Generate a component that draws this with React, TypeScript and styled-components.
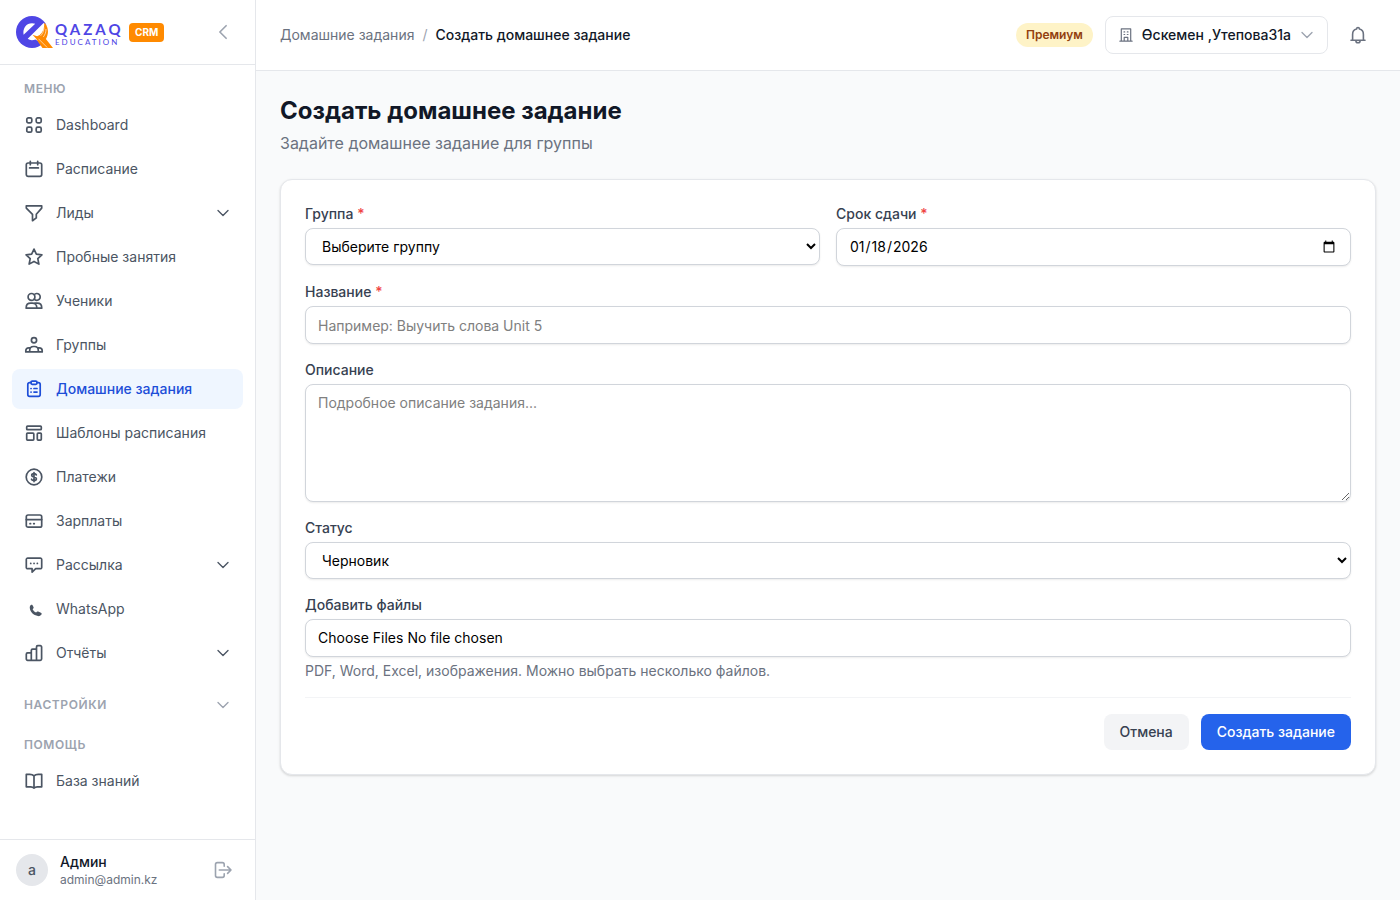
import React from "react";
import styled, { createGlobalStyle, css } from "styled-components";

const GlobalStyle = createGlobalStyle`
  *, *::before, *::after { box-sizing: border-box; }
  body {
    margin: 0;
    background: #f9fafb;
    color: #111827;
    font-family: Inter, "Liberation Sans", sans-serif;
    font-size: 14px;
    line-height: 20px;
  }
  a { color: inherit; text-decoration: none; }
  button { font: inherit; border: 0; background: none; padding: 0; color: inherit; cursor: pointer; }
  h1, h2, p, ul { margin: 0; padding: 0; }
  ul { list-style: none; }
  svg { display: block; flex-shrink: 0; }
`;

/* ---------- icons ---------- */

const Outline: React.FC<{ children: React.ReactNode; size?: number; stroke?: number; box?: number }> = ({
  children,
  size = 20,
  stroke = 1.7,
  box = 20,
}) => (
  <svg
    width={size}
    height={size}
    viewBox={`0 0 ${box} ${box}`}
    fill="none"
    stroke="currentColor"
    strokeWidth={stroke}
    strokeLinecap="round"
    strokeLinejoin="round"
    aria-hidden="true"
  >
    {children}
  </svg>
);

const icons = {
  grid: (
    <Outline>
      <rect x="2.8" y="2.8" width="5" height="5" rx="1.5" />
      <rect x="12.2" y="2.8" width="5" height="5" rx="1.5" />
      <rect x="2.8" y="12.2" width="5" height="5" rx="1.5" />
      <rect x="12.2" y="12.2" width="5" height="5" rx="1.5" />
    </Outline>
  ),
  calendar: (
    <Outline>
      <rect x="2.3" y="4" width="15.4" height="13.4" rx="1.8" />
      <path d="M6.3 2.3v3.4M13.7 2.3v3.4M5.6 8.9h8.8" />
    </Outline>
  ),
  funnel: (
    <Outline>
      <path d="M2.3 2.8h15.4v2.300l-5.400 6.200v3.600l-3.800 2.800v-6.400L2.300 5.100z" />
    </Outline>
  ),
  star: (
    <Outline>
      <path d="m10 2.100 2.350 5.050 5.550.680-4.100 3.800 1.080 5.500L10 14.400l-4.880 2.730 1.080-5.500-4.100-3.800 5.550-.680z" />
    </Outline>
  ),
  users: (
    <Outline>
      <circle cx="7.500" cy="5.900" r="3.400" />
      <path d="M10.200 3.700a3.400 3.400 0 1 1 0 4.400M2.200 17.200v-.7c0-2.600 1.900-4.300 4.500-4.300h1.600c2.600 0 4.500 1.700 4.500 4.300v.7zM11.200 12.200h2c2.600 0 4.500 1.700 4.500 4.300v.7h-4.900" />
    </Outline>
  ),
  group: (
    <Outline>
      <circle cx="10" cy="5.300" r="2.600" />
      <path d="M5.700 16.900v-1.600c0-2.200 1.600-3.800 3.800-3.800h1c2.200 0 3.800 1.600 3.800 3.800v1.600zM6.100 12.900H4.800c-1.900 0-3 1.200-3 2.900v1.100h3.900M13.900 12.900h1.300c1.900 0 3 1.200 3 2.900v1.100h-3.900" />
    </Outline>
  ),
  clipboard: (
    <Outline>
      <path d="M7 3.600H5.600A1.800 1.800 0 0 0 3.800 5.400v10.200a1.800 1.800 0 0 0 1.800 1.800h8.800a1.800 1.800 0 0 0 1.800-1.800V5.400a1.800 1.800 0 0 0-1.800-1.800H13" />
      <rect x="7" y="2.100" width="6" height="3.200" rx="1.200" />
      <path d="M7 9.500h.1M10 9.500h3M7 13.100h.1M10 13.100h3" />
    </Outline>
  ),
  template: (
    <Outline>
      <rect x="2.700" y="3.200" width="14.600" height="3.500" rx=".8" />
      <rect x="2.700" y="10.200" width="7.100" height="6.900" rx=".8" />
      <rect x="13.300" y="10.200" width="4" height="6.900" rx=".8" />
    </Outline>
  ),
  dollar: (
    <Outline>
      <circle cx="10" cy="10" r="7.800" />
      <path d="M12.300 7.900c-.3-.8-1.200-1.300-2.300-1.300-1.300 0-2.300.6-2.300 1.600 0 2.500 4.700 1.200 4.700 3.600 0 1.100-1.100 1.700-2.400 1.700-1.200 0-2.200-.5-2.500-1.300M10 5.500v9.100" />
    </Outline>
  ),
  card: (
    <Outline>
      <rect x="2.300" y="4" width="15.400" height="12.200" rx="1.800" />
      <path d="M2.300 8.600h15.400M6 12.700h.6M9.700 12.700h.6" />
    </Outline>
  ),
  message: (
    <Outline>
      <path d="M4.100 3.100h11.800a1.500 1.500 0 0 1 1.800 1.800v7a1.500 1.500 0 0 1-1.800 1.800h-4.200l-3.600 3.400v-3.400h-4a1.500 1.500 0 0 1-1.800-1.800v-7a1.500 1.500 0 0 1 1.800-1.800z" />
      <path d="M6.700 8.400h.1M10 8.400h.1M13.300 8.400h.1" />
    </Outline>
  ),
  phone: (
    <svg width="20" height="20" viewBox="0 0 20 20" fill="currentColor" aria-hidden="true">
      <path d="M6.900 5.900c.5-.4 1.200-.3 1.500.2l1.100 2c.3.500.2 1-.2 1.400l-.7.700c.8 1.600 1.900 2.700 3.500 3.400l.8-.8c.4-.4.900-.4 1.300-.2l2.700 1.100c.7.300 1 1 .7 1.600-.7 1.300-2.100 2-3.600 1.800-4.600-.7-7.900-4-8.200-8-.1-1.400.2-2.600 1.100-3.200z" />
    </svg>
  ),
  bars: (
    <Outline>
      <path d="M7.300 17.300H3.600a1.300 1.300 0 0 1-1.300-1.300v-4.800a1.300 1.300 0 0 1 1.300-1.300h3.700M7.300 17.300V7.500a1.300 1.300 0 0 1 1.300-1.300h3.900v11.100zM12.500 17.300V4a1.300 1.300 0 0 1 1.300-1.300h2.500A1.300 1.300 0 0 1 17.600 4v12a1.300 1.300 0 0 1-1.300 1.300z" />
    </Outline>
  ),
  book: (
    <Outline>
      <path d="M10 4.900C8.900 3.700 7.500 3.300 5.800 3.300H2.300v12.500h4.400c1.400 0 2.500.4 3.300 1.300.8-.9 1.900-1.300 3.300-1.300h4.400V3.300h-3.500c-1.700 0-3.100.4-4.200 1.600zM10 4.900v12.200" />
    </Outline>
  ),
};

type IconName = keyof typeof icons;

const ChevronDown: React.FC<{ stroke?: number }> = ({ stroke = 2 }) => (
  <Outline size={16} box={24} stroke={stroke}>
    <path d="m19.500 8.250-7.500 7.500-7.500-7.500" />
  </Outline>
);

const ChevronLeft = () => (
  <Outline box={24} stroke={2}>
    <path d="M15.750 19.500 8.250 12l7.500-7.500" />
  </Outline>
);

const LogoutIcon = () => (
  <Outline stroke={1.6}>
    <path d="M11.200 6.300V4.400a1.800 1.800 0 0 0-1.800-1.800H4.300a1.800 1.800 0 0 0-1.800 1.800v11.200a1.800 1.800 0 0 0 1.800 1.800h5.100a1.800 1.800 0 0 0 1.800-1.800v-1.900M6.300 10h11.700M14.600 6.600 18 10l-3.400 3.400" />
  </Outline>
);

const BuildingIcon = () => (
  <Outline size={16} box={16} stroke={1.2}>
    <path d="M1.900 14.200h12.200M3.300 14.200V1.900h9.400v12.300M6 4.900h.7M9.300 4.900h.7M6 7.500h.7M9.300 7.500h.7M6.200 14v-3.600h3.600V14" />
  </Outline>
);

const BellIcon = () => (
  <Outline stroke={1.6}>
    <path d="M3 15.300h14M4.600 15.100V9.400c0-2.700 1.700-4.900 4-5.400 0-.9.600-1.500 1.400-1.500s1.400.6 1.400 1.500c2.300.5 4 2.700 4 5.400v5.700M7.900 15.700a2.100 2.100 0 0 0 4.200 0" />
  </Outline>
);

const LogoMark = () => (
  <svg width="37" height="33" viewBox="0 0 37 33" aria-hidden="true">
    <circle cx="16" cy="16" r="16" fill="#4f46e5" />
    <path d="M7.600 18.700C6.300 12 10.500 7.200 16 7.200c1.300 0 2.300.2 3.200.6z" fill="#fff" />
    <path d="M11.700 22.800 27.600 6.900l6.400 5.100v11l-9 4-5.500-3.600c-3 1.300-5.800.9-7.800-.6z" fill="#fff" />
    <path d="m28.300 7 1.200.8c3.200 5 3.300 10.400.4 15.200L37 32H26.500l-4-5.500-2.300-3.800-3.700-4 4.600 1.500 2.600-1.200c3.200-2.600 4.700-6.400 4.600-12z" fill="#ff8a00" />
    <path d="M28 11.500c-.2 3.600-1.400 6.300-3.400 8.300M30 13c.1 3-.9 5.700-2.700 8M22.500 22.800l8.700 8.700" fill="none" stroke="#fff" strokeWidth=".6" />
  </svg>
);

/* ---------- layout ---------- */

const Shell = styled.div`
  display: flex;
  min-height: 100vh;
`;

const Sidebar = styled.aside`
  display: flex;
  flex-direction: column;
  flex: 0 0 256px;
  height: 100vh;
  position: sticky;
  top: 0;
  background: #fff;
  border-right: 1px solid #e5e7eb;
`;

const Brand = styled.div`
  display: flex;
  align-items: center;
  justify-content: space-between;
  height: 65px;
  padding: 0 22px 0 16px;
  border-bottom: 1px solid #e5e7eb;
`;

const BrandLink = styled.a`
  display: flex;
  align-items: center;
`;

const Wordmark = styled.span`
  display: flex;
  flex-direction: column;
  gap: 2px;
  width: 74px;
  margin-left: 2px;
  padding-top: 4px;
  font-family: Lato, sans-serif;
  color: #4f46e5;
  white-space: nowrap;
`;

const WordmarkName = styled.span`
  font-size: 15px;
  line-height: 14px;
  font-weight: 700;
  letter-spacing: 3px;
`;

const WordmarkSub = styled.span`
  font-size: 8px;
  line-height: 9px;
  letter-spacing: 2px;
`;

const CrmTag = styled.span`
  padding: 2px 6px;
  border-radius: 4px;
  background: #ff8a00;
  color: #fff;
  font-size: 10px;
  line-height: 15px;
  font-weight: 700;
`;

const IconButton = styled.button<{ $tone?: string; $pad?: number }>`
  display: flex;
  padding: ${(p) => p.$pad ?? 0}px;
  color: ${(p) => p.$tone ?? "#9ca3af"};
`;

const Nav = styled.nav`
  flex: 1;
  min-height: 0;
  overflow: hidden;
  padding: 16px 12px;
`;

const sectionText = css`
  font-size: 12px;
  line-height: 16px;
  font-weight: 600;
  letter-spacing: 0.05em;
  text-transform: uppercase;
  color: #9ca3af;
`;

const SectionTitle = styled.h2`
  ${sectionText}
  padding: 0 12px;
  margin-bottom: 8px;
`;

const SectionToggle = styled.button`
  ${sectionText}
  display: flex;
  align-items: center;
  justify-content: space-between;
  width: 100%;
  padding: 0 12px;
  margin: 24px 0;
`;

const NavList = styled.ul`
  display: flex;
  flex-direction: column;
  gap: 4px;
`;

const NavItem = styled.a<{ $active?: boolean }>`
  display: flex;
  align-items: center;
  gap: 12px;
  height: 40px;
  padding: 0 12px;
  border-radius: 8px;
  color: ${(p) => (p.$active ? "#1d4ed8" : "#4b5563")};
  background: ${(p) => (p.$active ? "#eff6ff" : "transparent")};
  font-weight: ${(p) => (p.$active ? 500 : 400)};
`;

const NavLabel = styled.span`
  flex: 1;
`;

const Account = styled.div`
  display: flex;
  align-items: center;
  gap: 12px;
  padding: 12px 22px 12px 16px;
  border-top: 1px solid #e5e7eb;
`;

const Avatar = styled.span`
  display: grid;
  place-items: center;
  width: 32px;
  height: 32px;
  border-radius: 50%;
  background: #e5e7eb;
  color: #4b5563;
  font-weight: 500;
`;

const AccountText = styled.div`
  flex: 1;
`;

const AccountName = styled.p`
  font-weight: 500;
`;

const AccountEmail = styled.p`
  font-size: 12px;
  line-height: 16px;
  color: #6b7280;
`;

const Content = styled.div`
  flex: 1;
  min-width: 0;
`;

const Topbar = styled.header`
  display: flex;
  align-items: center;
  justify-content: space-between;
  padding: 16px 24px;
  background: #fff;
  border-bottom: 1px solid #e5e7eb;
`;

const Breadcrumbs = styled.nav`
  display: flex;
  gap: 8px;
  color: #6b7280;
`;

const Separator = styled.span`
  color: #9ca3af;
`;

const Current = styled.span`
  color: #111827;
  font-weight: 500;
`;

const TopbarActions = styled.div`
  display: flex;
  align-items: center;
  gap: 12px;
`;

const PlanBadge = styled.span`
  padding: 4px 10px;
  border-radius: 12px;
  background: #fef3c7;
  color: #92400e;
  font-size: 12px;
  line-height: 16px;
  font-weight: 600;
`;

const BranchButton = styled.button`
  display: flex;
  align-items: center;
  gap: 8px;
  padding: 8px 12px;
  border: 1px solid #e5e7eb;
  border-radius: 8px;
  font-weight: 500;

  svg:first-child { color: #6b7280; }
  svg:last-child { color: #9ca3af; }
`;

const Main = styled.main`
  padding: 24px;
`;

const PageTitle = styled.h1`
  font-size: 24px;
  line-height: 32px;
  font-weight: 700;
`;

const PageSubtitle = styled.p`
  margin: 4px 0 24px;
  font-size: 16px;
  line-height: 24px;
  color: #6b7280;
`;

const Card = styled.form`
  display: flex;
  flex-direction: column;
  gap: 16px;
  padding: 24px;
  background: #fff;
  border: 1px solid #e5e7eb;
  border-radius: 12px;
  box-shadow: 0 1px 3px rgba(0, 0, 0, 0.1), 0 1px 2px rgba(0, 0, 0, 0.06);
`;

const FieldRow = styled.div`
  display: grid;
  grid-template-columns: 1fr 1fr;
  align-items: start;
  gap: 16px;
`;

const Field = styled.div`
  display: flex;
  flex-direction: column;
  gap: 4px;
`;

const Label = styled.label`
  color: #374151;
  font-weight: 500;
`;

const Required = styled.span`
  color: #ef4444;
`;

const control = css`
  display: block;
  width: 100%;
  margin: 0;
  padding: 8px 12px;
  border: 1px solid #d1d5db;
  border-radius: 8px;
  background: #fff;
  color: #000;
  font-family: inherit;
  font-size: 14px;
  line-height: 20px;
  box-shadow: 0 1px 2px rgba(0, 0, 0, 0.08);

  &::placeholder { color: #808080; }
`;

const Input = styled.input`
  ${control}
  height: 38px;

  &::file-selector-button {
    margin: 0 4px 0 0;
    padding: 0;
    border: 0;
    background: transparent;
    font: inherit;
    color: inherit;
  }
`;

const Select = styled.select`
  ${control}
  height: 37px;
`;

const TextArea = styled.textarea`
  ${control}
  resize: vertical;
`;

const Hint = styled.p`
  color: #6b7280;
`;

const Actions = styled.div`
  display: flex;
  justify-content: flex-end;
  gap: 12px;
  padding-top: 16px;
  border-top: 1px solid #f3f4f6;
`;

const ActionButton = styled.button<{ $primary?: boolean }>`
  padding: 8px 16px;
  border-radius: 8px;
  font-weight: 500;
  color: ${(p) => (p.$primary ? "#fff" : "#374151")};
  background: ${(p) => (p.$primary ? "#2563eb" : "#f3f4f6")};
`;

/* ---------- data ---------- */

const menu: { icon: IconName; label: string; expandable?: boolean; active?: boolean }[] = [
  { icon: "grid", label: "Dashboard" },
  { icon: "calendar", label: "Расписание" },
  { icon: "funnel", label: "Лиды", expandable: true },
  { icon: "star", label: "Пробные занятия" },
  { icon: "users", label: "Ученики" },
  { icon: "group", label: "Группы" },
  { icon: "clipboard", label: "Домашние задания", active: true },
  { icon: "template", label: "Шаблоны расписания" },
  { icon: "dollar", label: "Платежи" },
  { icon: "card", label: "Зарплаты" },
  { icon: "message", label: "Рассылка", expandable: true },
  { icon: "phone", label: "WhatsApp" },
  { icon: "bars", label: "Отчёты", expandable: true },
];

export default function App() {
  return (
    <>
      <GlobalStyle />
      <Shell>
        <Sidebar>
          <Brand>
            <BrandLink href="#">
              <LogoMark />
              <Wordmark>
                <WordmarkName>QAZAQ</WordmarkName>
                <WordmarkSub>EDUCATION</WordmarkSub>
              </Wordmark>
              <CrmTag>CRM</CrmTag>
            </BrandLink>
            <IconButton type="button" aria-label="Свернуть меню">
              <ChevronLeft />
            </IconButton>
          </Brand>

          <Nav>
            <SectionTitle>Меню</SectionTitle>
            <NavList>
              {menu.map((item) => (
                <li key={item.label}>
                  <NavItem href="#" $active={item.active}>
                    {icons[item.icon]}
                    <NavLabel>{item.label}</NavLabel>
                    {item.expandable && <ChevronDown />}
                  </NavItem>
                </li>
              ))}
            </NavList>
            <SectionToggle type="button">
              Настройки
              <ChevronDown />
            </SectionToggle>
            <SectionTitle>Помощь</SectionTitle>
            <NavItem href="#">
              {icons.book}
              <NavLabel>База знаний</NavLabel>
            </NavItem>
          </Nav>

          <Account>
            <Avatar>a</Avatar>
            <AccountText>
              <AccountName>Админ</AccountName>
              <AccountEmail>admin@admin.kz</AccountEmail>
            </AccountText>
            <IconButton type="button" aria-label="Выйти">
              <LogoutIcon />
            </IconButton>
          </Account>
        </Sidebar>

        <Content>
          <Topbar>
            <Breadcrumbs>
              <a href="#">Домашние задания</a>
              <Separator>/</Separator>
              <Current>Создать домашнее задание</Current>
            </Breadcrumbs>
            <TopbarActions>
              <PlanBadge>Премиум</PlanBadge>
              <BranchButton type="button">
                <BuildingIcon />
                Өскемен ,Утепова31а
                <ChevronDown />
              </BranchButton>
              <IconButton type="button" aria-label="Уведомления" $tone="#6b7280" $pad={8}>
                <BellIcon />
              </IconButton>
            </TopbarActions>
          </Topbar>

          <Main>
            <PageTitle>Создать домашнее задание</PageTitle>
            <PageSubtitle>Задайте домашнее задание для группы</PageSubtitle>

            <Card>
              <FieldRow>
                <Field>
                  <Label htmlFor="group">
                    Группа <Required>*</Required>
                  </Label>
                  <Select id="group">
                    <option>Выберите группу</option>
                  </Select>
                </Field>
                <Field>
                  <Label htmlFor="due">
                    Срок сдачи <Required>*</Required>
                  </Label>
                  <Input id="due" type="date" defaultValue="2026-01-18" />
                </Field>
              </FieldRow>
              <Field>
                <Label htmlFor="title">
                  Название <Required>*</Required>
                </Label>
                <Input id="title" type="text" placeholder="Например: Выучить слова Unit 5" />
              </Field>
              <Field>
                <Label htmlFor="description">Описание</Label>
                <TextArea id="description" rows={5} placeholder="Подробное описание задания..." />
              </Field>
              <Field>
                <Label htmlFor="status">Статус</Label>
                <Select id="status">
                  <option>Черновик</option>
                </Select>
              </Field>
              <Field>
                <Label htmlFor="files">Добавить файлы</Label>
                <Input id="files" type="file" multiple />
                <Hint>PDF, Word, Excel, изображения. Можно выбрать несколько файлов.</Hint>
              </Field>
              <Actions>
                <ActionButton type="button">Отмена</ActionButton>
                <ActionButton type="submit" $primary>
                  Создать задание
                </ActionButton>
              </Actions>
            </Card>
          </Main>
        </Content>
      </Shell>
    </>
  );
}
